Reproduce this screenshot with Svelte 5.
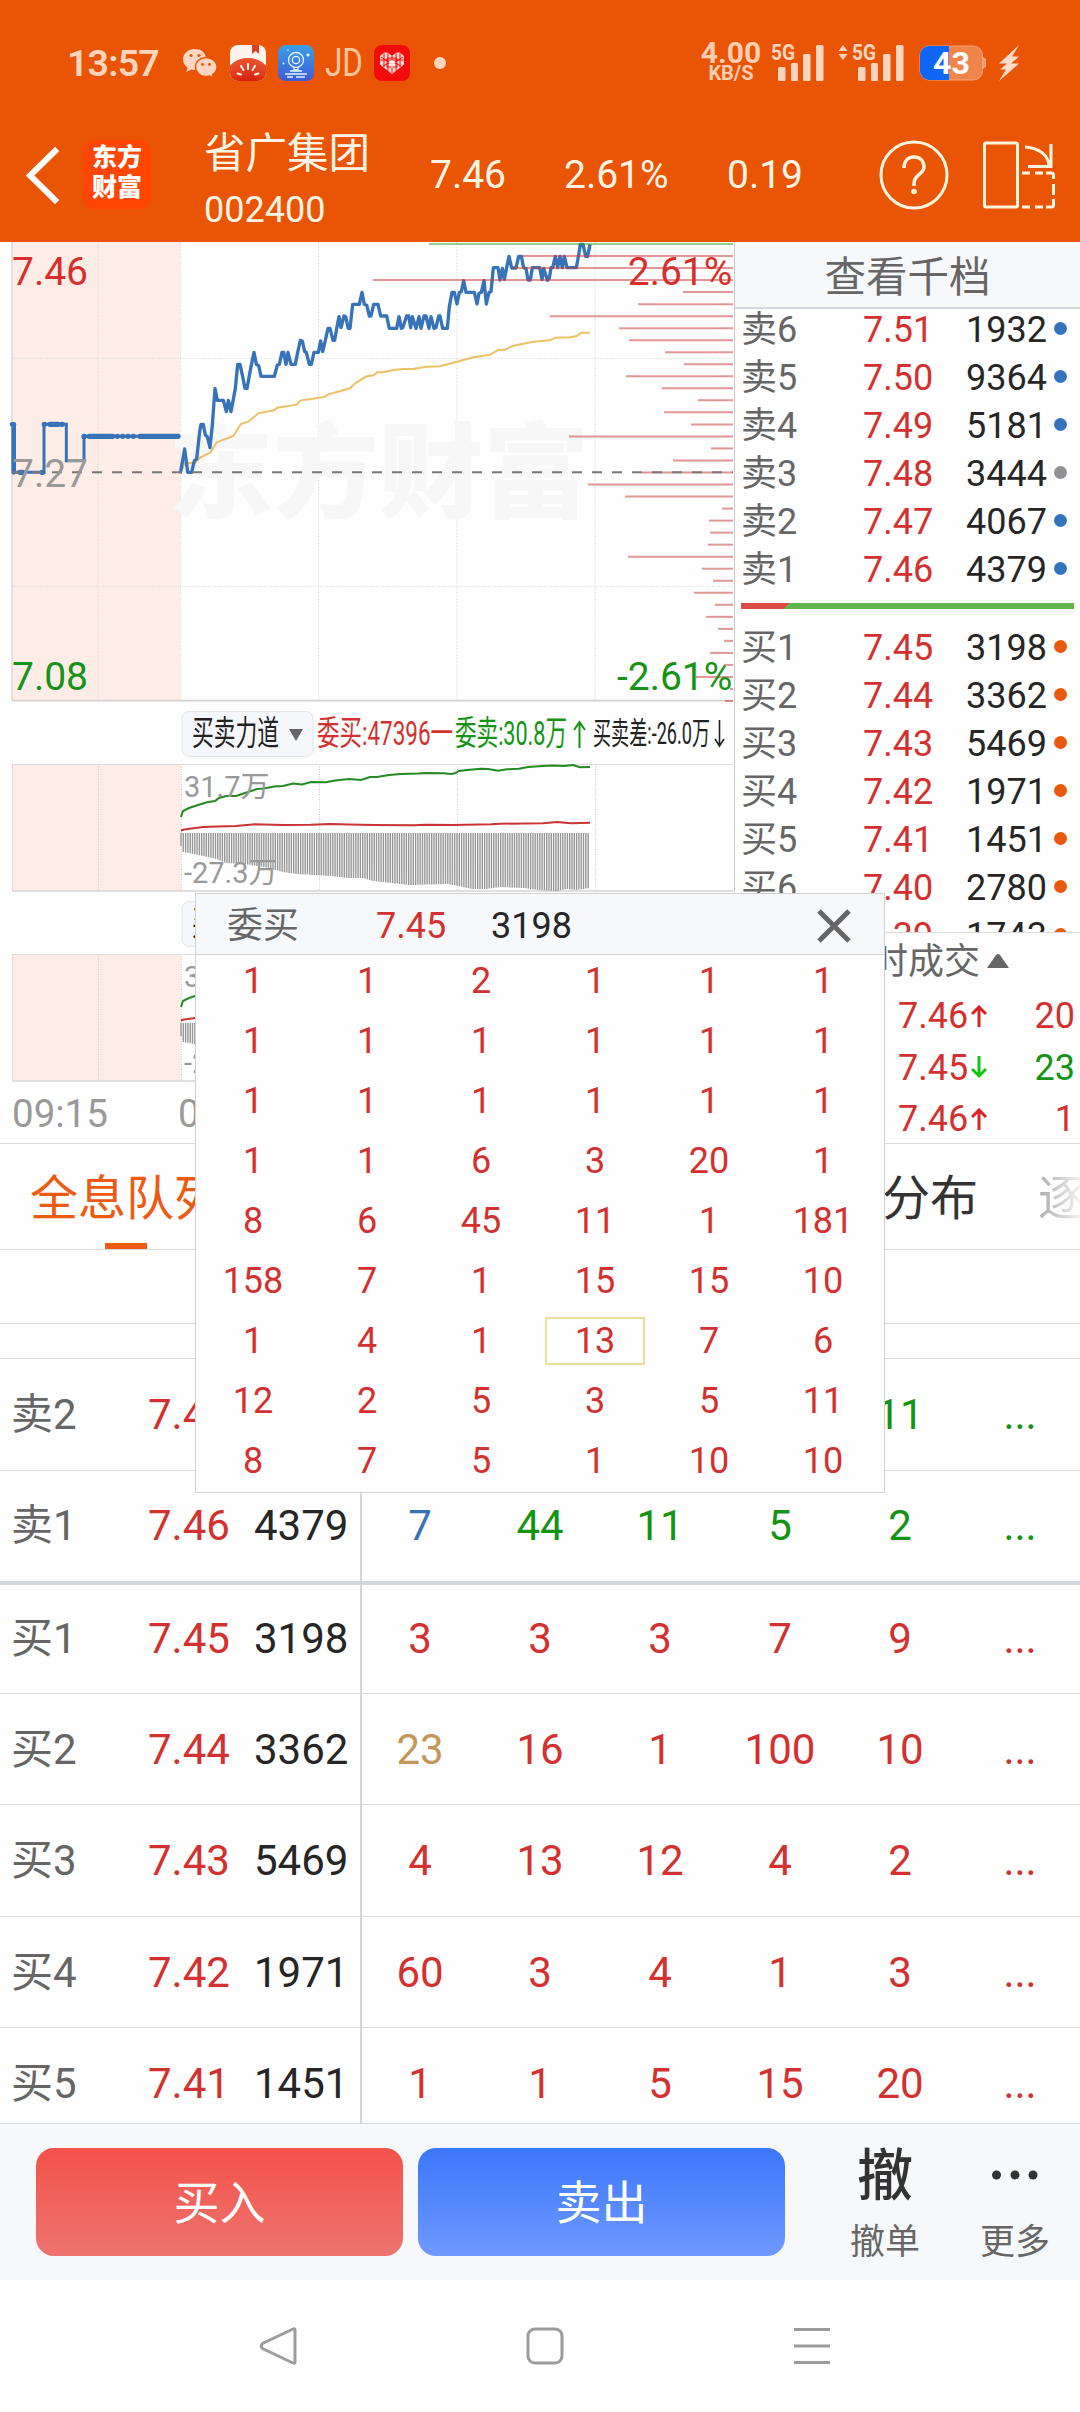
<script lang="ts">
	type Level = { label: string; price: string; volume: string; dot: string };

	const sells: Level[] = [
		{ label: '卖6', price: '7.51', volume: '1932', dot: 'blue' },
		{ label: '卖5', price: '7.50', volume: '9364', dot: 'blue' },
		{ label: '卖4', price: '7.49', volume: '5181', dot: 'blue' },
		{ label: '卖3', price: '7.48', volume: '3444', dot: 'gray' },
		{ label: '卖2', price: '7.47', volume: '4067', dot: 'blue' },
		{ label: '卖1', price: '7.46', volume: '4379', dot: 'blue' }
	];

	const buys: Level[] = [
		{ label: '买1', price: '7.45', volume: '3198', dot: 'orange' },
		{ label: '买2', price: '7.44', volume: '3362', dot: 'orange' },
		{ label: '买3', price: '7.43', volume: '5469', dot: 'orange' },
		{ label: '买4', price: '7.42', volume: '1971', dot: 'orange' },
		{ label: '买5', price: '7.41', volume: '1451', dot: 'orange' },
		{ label: '买6', price: '7.40', volume: '2780', dot: 'orange' },
		{ label: '', price: '7.39', volume: '1743', dot: 'orange' }
	];

	const trades = [
		{ price: '7.46', up: true, qty: '20', color: 'red' },
		{ price: '7.45', up: false, qty: '23', color: 'green' },
		{ price: '7.46', up: true, qty: '1', color: 'red' }
	];

	const queue = [
		{ label: '卖2', price: '7.47', volume: '', side: 'sell', orders: ['', '', '', '', '11'] },
		{ label: '卖1', price: '7.46', volume: '4379', side: 'sell', orders: ['7', '44', '11', '5', '2'], mark: 'blue' },
		{ label: '买1', price: '7.45', volume: '3198', side: 'buy', orders: ['3', '3', '3', '7', '9'] },
		{ label: '买2', price: '7.44', volume: '3362', side: 'buy', orders: ['23', '16', '1', '100', '10'], mark: 'gold' },
		{ label: '买3', price: '7.43', volume: '5469', side: 'buy', orders: ['4', '13', '12', '4', '2'] },
		{ label: '买4', price: '7.42', volume: '1971', side: 'buy', orders: ['60', '3', '4', '1', '3'] },
		{ label: '买5', price: '7.41', volume: '1451', side: 'buy', orders: ['1', '1', '5', '15', '20'] }
	];

	const popupOrders = [
		1, 1, 2, 1, 1, 1,
		1, 1, 1, 1, 1, 1,
		1, 1, 1, 1, 1, 1,
		1, 1, 6, 3, 20, 1,
		8, 6, 45, 11, 1, 181,
		158, 7, 1, 15, 15, 10,
		1, 4, 1, 13, 7, 6,
		12, 2, 5, 3, 5, 11,
		8, 7, 5, 1, 10, 10
	];
	const selectedOrder = 39;

	// left end of each price-volume bar, one per cent step from the top
	const volumeBars = [
		429, 522, 512, 373, 683, 638, 550, 619, 629, 665, 684, 626, 662, 698, 664, 691, 569, 711, 673, 642,
		588, 625, 722, 709, 710, 708, 628, 702, 713, 694, 715, 706, 718, 724, 710, 724, 696, 730, 725
	];

	// chart paths use three units per pixel
	const pricePath =
		'541,715 554,642 563,712 575,712 583,677 590,672 599,590 603,568 610,568 616,600 622,605 630,638 637,570 645,460 652,496 670,496 679,530 685,496 693,530 706,460 713,388 720,388 728,425 735,460 741,460 752,400 762,352 769,388 776,392 783,424 823,424 832,390 838,388 846,352 851,352 858,388 864,352 873,388 886,388 893,352 901,316 907,318 914,350 919,352 928,388 934,388 942,352 955,352 962,318 968,350 976,316 984,280 990,280 999,316 1004,316 1011,275 1017,245 1023,278 1032,243 1037,245 1045,280 1050,280 1058,208 1078,208 1086,172 1093,208 1100,210 1108,243 1113,243 1121,208 1134,208 1142,243 1160,243 1168,280 1190,280 1197,245 1204,280 1208,278 1220,243 1226,243 1232,278 1237,245 1248,280 1257,245 1263,280 1272,243 1278,243 1287,280 1293,245 1302,280 1308,278 1316,243 1320,243 1328,280 1342,280 1348,215 1356,172 1363,172 1371,207 1378,172 1384,170 1391,137 1398,172 1423,172 1431,207 1437,175 1444,172 1452,137 1459,207 1467,172 1473,170 1480,98 1494,98 1500,135 1507,100 1513,133 1520,98 1527,64 1535,99 1548,99 1556,64 1564,64 1571,98 1578,100 1584,135 1591,135 1597,98 1619,98 1626,134 1631,100 1642,136 1648,130 1653,98 1658,98 1666,64 1673,98 1680,64 1687,98 1693,64 1701,98 1729,98 1736,60 1741,28 1749,28 1757,64 1763,64 1770,28';
	const averagePath =
		'541,715 554,684 585,684 600,668 632,652 650,622 700,603 722,567 745,560 775,535 822,526 832,518 890,509 902,496 940,491 975,485 985,478 1050,460 1065,445 1100,424 1120,421 1132,412 1150,412 1180,405 1210,402 1240,402 1280,395 1320,394 1360,383 1420,367 1470,359 1495,345 1515,344 1540,332 1600,320 1650,316 1666,308 1710,307 1730,303 1744,293 1770,293';

	const askPath =
		'181,53 183,47 189,44 198,41 208,38 215,37 219,34 226,32 236,32 245,29 257,25 264,24.5 274,22.5 283,22 293,19.5 302,20.5 311,18 326,18.3 335,16.5 349,15 361,16 370,13 377,13 389,11 401,10 418,9.5 425,9 443,9.3 451,10 455,9.3 459,7 467,6 481,4.7 488,5 498,6.7 507,5.3 519,4.7 528,3 543,2 552,1.5 564,2 573,1 580,3.3 590,3';
	const bidPath =
		'181,66.5 184,65.5 203,63 217,62.5 236,62 255,60.3 283,61 311,60.7 330,60 349,60.5 373,61 415,61.3 425,60.7 453,61 491,60.3 500,59.7 543,59.3 557,58 571,59.3 590,58.7';

	const envelope = [
		[181, 82], [183, 88], [189, 89], [203, 92], [217, 95], [226, 99], [245, 100], [264, 103], [283, 108],
		[297, 110], [330, 112], [349, 114], [363, 114], [373, 117], [410, 121], [448, 120], [458, 122],
		[472, 125], [486, 125], [500, 123], [524, 124], [538, 126], [557, 127], [566, 125], [576, 126], [590, 124]
	];

	function depthAt(x: number) {
		const i = envelope.findIndex((p) => p[0] > x);
		if (i < 1) return envelope[i === 0 ? 0 : envelope.length - 1][1];
		const [x0, y0] = envelope[i - 1];
		const [x1, y1] = envelope[i];
		return y0 + ((y1 - y0) * (x - x0)) / (x1 - x0);
	}

	const diffPath = Array.from({ length: 178 }, (_, i) => {
		const x = 181 + i * 2.3;
		return `M${x.toFixed(1)} 69V${depthAt(x).toFixed(1)}`;
	}).join('');
</script>

{#snippet signal()}
	<rect x="7" y="22" width="7.5" height="14" rx="1.5" />
	<rect x="20" y="18" width="7" height="18" rx="1.5" />
	<rect x="32" y="9" width="7.5" height="27" rx="1.5" />
	<rect x="45" y="0" width="7.5" height="36" rx="1.5" />
{/snippet}

{#snippet forcePanel()}
	<div class="indicator">
		<svg width="735" height="64" viewBox="0 0 735 64">
			<rect x="182" y="9.5" width="131" height="45" rx="7" fill="#f6f7fa" stroke="#e2e5e9" />
			<text x="192" y="43" textLength="87" lengthAdjust="spacingAndGlyphs" fill="#222">买卖力道</text>
			<path d="M289 27h14l-7 12z" fill="#666" />
			<text x="317" y="43" textLength="136" lengthAdjust="spacingAndGlyphs" fill="#d3312f">委买:47396一</text>
			<text x="455" y="43" textLength="112" lengthAdjust="spacingAndGlyphs" fill="#149414">委卖:30.8万</text>
			<path d="M579.500 46V20M574 28l5.500-8 5.500 8" fill="none" stroke="#149414" stroke-width="2" />
			<text class="small" x="593" y="42" textLength="117" lengthAdjust="spacingAndGlyphs" fill="#222">买卖差:-26.0万</text>
			<path d="M719.500 18v26M715 37l4.500 7 4.500-7" fill="none" stroke="#222" stroke-width="1.600" />
		</svg>
	</div>
	<svg class="force" width="735" height="128" viewBox="0 0 735 128">
		<rect x="12" y="0" width="169" height="127" fill="#fdede6" />
		<path d="M98.500 0V127M181.500 0V127M319.500 0V127M457.500 0V127M595.500 0V127" class="dots" />
		<path d="M12.500 0V127" stroke="#ddd" />
		<path d="M12 .5H733" stroke="#dcdcdc" />
		<path d="M12 127H733" stroke="#d4d4d4" stroke-width="1.500" />
		<path d={diffPath} stroke="#979797" stroke-width="1.400" />
		<polyline points={askPath} fill="none" stroke="#228b22" stroke-width="2" />
		<polyline points={bidPath} fill="none" stroke="#c93434" stroke-width="2" />
		<text x="184" y="33" class="scale">31.7万</text>
		<text x="184" y="119" class="scale">-27.3万</text>
	</svg>
{/snippet}

{#snippet level(row: Level)}
	<div class="level">
		<span class="muted">{row.label}</span>
		<span class="red">{row.price}</span>
		<span class="volume">{row.volume}</span>
		<i class="dot {row.dot}"></i>
	</div>
{/snippet}

<div class="screen">
	<div class="status">
		<span class="clock">13:57</span>
		<svg width="36" height="36" viewBox="0 0 36 36">
			<path fill="#ffd6c2" d="M13 4C6.200 4 1 8.500 1 14.500c0 3.500 1.800 6.300 4.600 8.200L4.300 27l4.900-2.500c1.300.3 2.500.5 3.800.5h2l9-11.500C23.600 7 18.600 4 13 4z" />
			<path fill="#ffd6c2" stroke="#e95504" stroke-width="1.400" d="M24 12.500c-6 0-10.500 4-10.500 9.500s4.500 9.500 10.500 9.500c1.200 0 2.400-.2 3.500-.5l4.200 2-1.100-3.500c2.500-1.700 4.400-4.200 4.400-7.500 0-5.500-5-9.500-11-9.500z" />
			<g fill="#e95504">
				<circle cx="9" cy="10.500" r="1.600" /><circle cx="17" cy="10.500" r="1.600" />
				<circle cx="20.500" cy="19.500" r="1.400" /><circle cx="27.500" cy="19.500" r="1.400" />
			</g>
		</svg>
		<svg width="36" height="36" viewBox="0 0 36 36">
			<defs>
				<clipPath id="tile"><rect width="36" height="36" rx="8" /></clipPath>
				<radialGradient id="tomato" cx=".5" cy=".9" r=".8">
					<stop offset="0" stop-color="#d01005" /><stop offset="1" stop-color="#e9502b" />
				</radialGradient>
			</defs>
			<g clip-path="url(#tile)">
				<rect width="36" height="36" fill="#fff3ee" />
				<path d="M22 0h7v9l-3.500-3L22 9z" fill="#d7431f" />
				<ellipse cx="18" cy="29" rx="21" ry="16" fill="url(#tomato)" />
				<path d="M18 19v5M11 21l2.500 4M25 21l-2.500 4M7.500 28.500l3.500 1M28.500 28.500l-3.500 1" stroke="#fff3ee" stroke-width="2" stroke-linecap="round" />
			</g>
		</svg>
		<svg width="36" height="36" viewBox="0 0 36 36">
			<defs>
				<linearGradient id="cam" x2="0" y2="1"><stop stop-color="#3aa0e4" /><stop offset="1" stop-color="#3d5bd8" /></linearGradient>
			</defs>
			<rect width="36" height="36" rx="8" fill="url(#cam)" />
			<g fill="none" stroke="#e6f4ff" stroke-width="1.300">
				<circle cx="18" cy="15" r="7.500" /><circle cx="18" cy="15" r="3.700" />
				<path d="M16 22v3h4v-3M12 26h12M7 29h22M9 32h6M18 32h9" />
			</g>
			<g fill="#e6f4ff"><circle cx="30" cy="10" r="1.500" /><circle cx="5.500" cy="18.500" r="1" /><circle cx="10" cy="5" r=".8" /></g>
		</svg>
		<svg class="jd" width="36" height="36" viewBox="0 0 36 36" fill="#ffc4a2">
			<text x="-1" y="31" textLength="38" lengthAdjust="spacingAndGlyphs">JD</text>
		</svg>
		<svg width="36" height="36" viewBox="0 0 36 36">
			<rect width="36" height="36" rx="8" fill="#f20b0b" />
			<path d="M18 29L6 19.500V11l4-3.500h4L18 11l4-3.500h4L30 11v8.500z" fill="#ffd9d4" />
			<path d="M6 15h24M10 8v14M14 7v19M22 7v19M26 8v14M7 12l8 5M29 12l-8 5M9 21l6-3M27 21l-6-3M18 11v17M13 13h10v9H13z" stroke="#f20b0b" stroke-width="1" fill="none" />
			<path d="M15 17h6M15 20h6M18 15v8" stroke="#fff" stroke-width="1.200" />
		</svg>
		<i class="more"></i>

		<div class="speed"><b>4.00</b><span>KB/S</span></div>
		<svg class="sig" width="54" height="38" viewBox="0 -1 54 38" fill="#ffd5c2">
			<text x="0" y="15" textLength="24" lengthAdjust="spacingAndGlyphs">5G</text>
			{@render signal()}
		</svg>
		<svg class="sig" width="68" height="38" viewBox="-14 -1 68 38" fill="#ffd5c2">
			<path d="M-12.500 6L-8 0l4.500 6zM-12.500 9L-8 15l4.500-6z" />
			<text x="1" y="15" textLength="24" lengthAdjust="spacingAndGlyphs">5G</text>
			{@render signal()}
		</svg>
		<svg class="battery" width="68" height="36" viewBox="0 0 68 36">
			<rect x="1" y="1" width="62.500" height="34" rx="9" fill="#f0854c" stroke="#f5a078" />
			<path d="M30 1H10a9 9 0 0 0-9 9v16a9 9 0 0 0 9 9h20z" fill="#1067f5" />
			<path d="M64 12l3 2v8l-3 2z" fill="#f5a078" />
			<text x="14" y="29" textLength="37" lengthAdjust="spacingAndGlyphs" fill="#fff">43</text>
		</svg>
		<svg class="bolt" width="22" height="38" viewBox="0 0 22 38"><path d="M21 1L1 19.500h8L2 25.500h6L1 37l20-17.500h-8l8-7h-7z" fill="#ffdccb" /></svg>
	</div>

	<header>
		<svg class="back" width="40" height="60" viewBox="0 0 40 60"><path d="M31 6L6 30.500 31 55" fill="none" stroke="#fff" stroke-width="6" stroke-linecap="square" /></svg>
		<div class="logo">东方<br />财富</div>
		<div class="stock"><div class="name">省广集团</div><div>002400</div></div>
		<span>7.46</span>
		<span>2.61%</span>
		<span>0.19</span>
		<svg width="70" height="72" viewBox="0 0 70 72">
			<circle cx="35" cy="36" r="33" fill="none" stroke="#fff5df" stroke-width="3" />
			<path d="M25 29c0-7 4-11 10-11s10 4 10 10c0 7-10 8-10 16v3" fill="none" stroke="#fff5df" stroke-width="3.500" />
			<circle cx="35" cy="52.500" r="2.800" fill="#fff5df" />
		</svg>
		<svg width="78" height="72" viewBox="0 0 78 72" fill="none" stroke="#fff5df" stroke-width="3">
			<rect x="3.500" y="4" width="33" height="64" rx="1.500" />
			<path d="M44 8c14 1 24 8 24 20M70 5v22.500H47" />
			<path d="M41 34h8M54 34h8M65 34h5.500a2 2 0 0 1 2 2v4M72.500 45v11M72.500 60v6a2 2 0 0 1-2 2H65M62 68h-8M49 68h-8" />
		</svg>
	</header>

	<div class="market">
		<div class="charts">
			<svg class="trend" width="735" height="460" viewBox="0 21 2205 1380">
				<rect x="36" y="21" width="505" height="1376" fill="#fdede6" />
				<path d="M36 21V1397" stroke="#ddd" stroke-width="5" />
				<path d="M294 21V1397M542 21V1397M956 21V1397M1371 21V1397M1785 21V1397M36 370H2199M36 1054H2199" stroke="#d6d6d6" stroke-width="3" stroke-dasharray="3 4" />
				<text class="watermark" x="504" y="826" textLength="1262" lengthAdjust="spacingAndGlyphs">东方财富</text>
				<path d="M36 1397H2199" stroke="#d2d2d2" stroke-width="5" />
				<polyline points={averagePath} fill="none" stroke="#ecc065" stroke-width="6" />
				<g fill="none" stroke="#3673b9">
					<path d="M36 568h6M41 568V712" stroke-width="14" stroke-linecap="round" />
					<path d="M41 712H132V568H199V677H252V604H540" stroke-width="9" />
					<path d="M60 712h8M126 712h2M150 568h24M186 568h1M133 568h.1M252 604h1M268 604h70M352 604h.1M368 604h.1M384 604h.1M400 604h.1M420 604H534" stroke-width="16" stroke-linecap="round" />
					<polyline points={pricePath} stroke-width="10" stroke-linejoin="round" />
				</g>
				{#each volumeBars as left, i}
					<path d="M{left * 3} {27 + i * 36.08}H2199" stroke={i === 0 ? '#2f9b2f' : '#c83838'} stroke-opacity=".52" stroke-width="6" />
				{/each}
				<path d="M36 712H2199" stroke="#777" stroke-width="6" stroke-dasharray="30 30" />
				<g class="axis">
					<text x="36" y="151" fill="#d92f2c">7.46</text>
					<text x="36" y="757" fill="#999">7.27</text>
					<text x="36" y="1365" fill="#169416">7.08</text>
					<text x="2197" y="151" text-anchor="end" fill="#d92f2c">2.61%</text>
					<text x="2197" y="1365" text-anchor="end" fill="#169416">-2.61%</text>
				</g>
			</svg>
			{@render forcePanel()}
			{@render forcePanel()}
			<div class="times"><span>09:15</span><span>09:30</span></div>
		</div>

		<aside>
			<div class="depth-title">查看千档</div>
			<div class="levels">
				{#each sells as row}
					{@render level(row)}
				{/each}
				<div class="ratio"></div>
				{#each buys as row}
					{@render level(row)}
				{/each}
			</div>
			<div class="trades">
				<div class="trades-title">时成交<svg width="22" height="16" viewBox="0 0 22 16"><path d="M0 14L9 1q2-2 4 0L22 14z" fill="#666" /></svg></div>
				{#each trades as t}
					<div class="trade">
						<span class="red">{t.price}</span>
						<svg width="16" height="24" viewBox="0 0 16 24" fill="none" stroke={t.up ? '#d92222' : '#11c411'} stroke-width="3">
							<path d={t.up ? 'M8 22V2M1 9l7-7 7 7' : 'M8 0v20M1 13l7 7 7-7'} />
						</svg>
						<span class="qty {t.color}">{t.qty}</span>
					</div>
				{/each}
			</div>
		</aside>
	</div>

	<nav class="tabs">
		<span class="tab active">全息队列</span>
		<span class="tab second">分布</span>
		<span class="tab fade">逐</span>
	</nav>
	<div class="strip tall"></div>
	<div class="strip"></div>

	<div class="queue">
		{#each queue as row}
			<div class="row {row.side}" class:last-sell={row.label === '卖1'} class:first-buy={row.label === '买1'}>
				<div class="head">
					<span class="muted">{row.label}</span>
					<span class="red price">{row.price}</span>
					<span class="volume">{row.volume}</span>
				</div>
				{#each row.orders as order, i}
					<span class="order {i === 0 ? row.mark : ''}">{order}</span>
				{/each}
				<span class="order">...</span>
			</div>
		{/each}
	</div>

	<footer>
		<button class="buy">买入</button>
		<button class="sell">卖出</button>
		<div class="tool"><b>撤</b><span>撤单</span></div>
		<div class="tool">
			<svg width="48" height="54" viewBox="0 0 48 54" fill="#333"><circle cx="5.500" cy="27" r="4.500" /><circle cx="24" cy="27" r="4.500" /><circle cx="42" cy="27" r="4.500" /></svg>
			<span>更多</span>
		</div>
	</footer>

	<div class="sysnav">
		<svg width="38" height="40" viewBox="0 0 38 40"><path d="M34 3L3.500 17.500q-2.500 2.500 0 5L34 37q2 1 2-1V4q0-2-2-1z" /></svg>
		<svg width="38" height="40" viewBox="0 0 38 40"><rect x="2" y="3" width="34" height="34" rx="7" /></svg>
		<svg width="38" height="40" viewBox="0 0 38 40"><path d="M1 3.500h36M1 20h36M1 36.500h36" /></svg>
	</div>

	<div class="popup">
		<div class="popup-head">
			<span class="muted">委买</span>
			<span class="red">7.45</span>
			<span>3198</span>
			<svg width="34" height="34" viewBox="0 0 34 34"><path d="M2 2l30 30M32 2L2 32" stroke="#666" stroke-width="5" /></svg>
		</div>
		<div class="popup-grid">
			{#each popupOrders as n, i}
				<span class:selected={i === selectedOrder}>{n}</span>
			{/each}
		</div>
	</div>
</div>

<style>
	:global(body) {
		margin: 0;
		background: #fff;
	}

	.screen {
		position: relative;
		width: 1080px;
		height: 2412px;
		overflow: hidden;
		background: #fefefe;
		color: #262626;
		font-family: Roboto, 'Noto Sans CJK SC', sans-serif;
		font-size: 36px;
		display: flex;
		flex-direction: column;
	}

	svg {
		display: block;
		flex: none;
	}

	.red { color: #d3312f; }
	.green { color: #149414; }
	.muted { color: #666; }

	.status {
		height: 125px;
		flex: none;
		box-sizing: border-box;
		padding-left: 67px;
		display: flex;
		align-items: center;
		gap: 12px;
		background: #e95504;
		color: #ffd5c0;
	}

	.clock {
		width: 103px;
		font-size: 37.5px;
		font-weight: 600;
		letter-spacing: -0.8px;
	}

	.jd {
		overflow: visible;
		font-size: 38px;
	}

	.more {
		width: 12px;
		height: 12px;
		margin: 0 243px 0 12px;
		border-radius: 50%;
		background: #ffd5c0;
	}

	.speed {
		width: 60px;
		display: flex;
		flex-direction: column;
		align-items: center;
		line-height: 20px;
		color: #ffceb3;
	}

	.speed b {
		font-size: 30px;
		font-weight: 700;
	}

	.speed span {
		font-size: 20px;
		font-weight: 700;
	}

	.sig {
		margin-left: -2px;
		overflow: visible;
	}

	.sig text {
		font-size: 22px;
		font-weight: 700;
	}

	.sig + .sig {
		margin-left: 0;
	}

	.battery {
		margin-left: 2px;
	}

	.battery text {
		font-size: 31px;
		font-weight: 700;
	}

	.bolt {
		margin-left: -1px;
	}

	header {
		height: 117px;
		flex: none;
		display: grid;
		grid-template-columns: 83px 121px 226px 134px 163px 152px 102px 1fr;
		grid-template-rows: 99px;
		align-items: center;
		background: #e95504;
		color: #fff5e6;
		font-size: 39px;
	}

	.back {
		margin-left: 24px;
	}

	.logo {
		width: 68px;
		height: 69px;
		box-sizing: border-box;
		padding-top: 3px;
		border-radius: 12px;
		background: #ff4605;
		text-align: center;
		font-size: 25px;
		font-weight: 900;
		line-height: 30px;
		color: #fff;
	}

	.stock {
		margin-top: 14px;
		font-size: 36px;
		line-height: 57px;
	}

	.stock .name {
		font-size: 41.5px;
		line-height: 57px;
	}

	.market {
		height: 901px;
		flex: none;
		display: flex;
		border-bottom: 1px solid #dcdcdc;
	}

	.charts {
		width: 734px;
		flex: none;
		overflow: hidden;
		border-right: 1px solid #ccc;
	}

	.axis text {
		font-size: 117px;
	}

	.watermark {
		font-size: 310px;
		font-weight: 900;
		fill: #f7f7f7;
	}

	.indicator {
		height: 62px;
	}

	.indicator text {
		font-size: 34px;
	}

	.indicator text.small {
		font-size: 31px;
	}

	.dots {
		stroke: #ccc;
		stroke-dasharray: 1 1.5;
	}

	.scale {
		font-size: 29px;
		fill: #999;
	}

	.times {
		display: flex;
		height: 62px;
		line-height: 63px;
		padding-left: 12px;
		font-size: 38.5px;
		color: #999;
	}

	.times span {
		width: 166px;
	}

	aside {
		flex: 1;
		min-width: 0;
	}

	.depth-title {
		height: 65px;
		line-height: 71px;
		border-bottom: 2px solid #d5d8dc;
		background: #f7f8fa;
		text-align: center;
		font-size: 41.5px;
		color: #666;
	}

	.levels {
		height: 624px;
		box-sizing: border-box;
		margin-top: -3px;
		padding-top: 0;
		height: 627px;
		overflow: hidden;
		border-bottom: 1px solid #dcdcdc;
	}

	.level {
		height: 48px;
		line-height: 49px;
		display: grid;
		grid-template-columns: 122px 1fr 81px 20px;
		padding: 0 13px 0 6px;
	}

	.dot {
		width: 13px;
		height: 13px;
		margin: 16px 0 0 7px;
		border-radius: 50%;
	}

	.dot.blue { background: #3474bf; }
	.dot.gray { background: #919195; }
	.dot.orange { background: #e85b0c; }

	.ratio {
		height: 6px;
		margin: 9px 6px 15px;
		background: linear-gradient(135deg, #dd4b47 34px, #62b54e 34.5px);
	}

	.trades-title {
		height: 58px;
		line-height: 62px;
		margin-left: 137px;
		display: flex;
		align-items: center;
		gap: 7px;
		color: #666;
	}

	.trade {
		height: 51.5px;
		line-height: 51.5px;
		padding: 0 5px 0 163px;
		display: flex;
		align-items: center;
		gap: 3px;
	}

	.qty {
		margin-left: auto;
	}

	.tabs {
		height: 105px;
		flex: none;
		display: flex;
		border-bottom: 1px solid #dcdcdc;
		font-size: 48px;
		line-height: 110px;
		white-space: nowrap;
		color: #333;
	}

	.tab {
		flex: none;
	}

	.tab.active {
		width: 192px;
		margin-left: 30px;
		color: #ed5b12;
		background: linear-gradient(#ef5a12, #ef5a12) center bottom / 42px 6px no-repeat;
	}

	.tab.second {
		margin-left: 660px;
	}

	.tab.fade {
		width: 43px;
		margin-left: 60px;
		overflow: hidden;
		background: linear-gradient(90deg, #aaa, #f4f4f4);
		background-clip: text;
		-webkit-background-clip: text;
		color: transparent;
	}

	.strip {
		height: 34px;
		flex: none;
		border-bottom: 1px solid #d9d9d9;
	}

	.strip.tall {
		height: 73px;
	}

	.queue {
		height: 764px;
		flex: none;
		overflow: hidden;
		font-size: 42px;
	}

	.row {
		height: 111.5px;
		box-sizing: border-box;
		border-bottom: 1.5px solid #d9dbde;
		display: grid;
		grid-template-columns: repeat(9, 120px);
		line-height: 111px;
	}

	.row.last-sell {
		height: 114px;
		line-height: 110px;
		border-bottom: 4px solid #d3d7da;
	}

	.row.first-buy {
		height: 109px;
		line-height: 107px;
	}

	.head {
		grid-column: span 3;
		margin-right: -2px;
		box-sizing: border-box;
		border-right: 2px solid #d3d7da;
		display: grid;
		grid-template-columns: 137px 106px 1fr;
		padding-left: 11px;
	}

	.order {
		text-align: center;
	}

	.sell .order { color: #149414; }
	.buy .order { color: #d3312f; }
	.row .order.blue { color: #3673b5; }
	.row .order.gold { color: #c4965a; }

	footer {
		height: 157px;
		flex: none;
		box-sizing: border-box;
		border-top: 1px solid #d5d8db;
		background: #f7f8fa;
		display: flex;
		padding: 24px 0 0 36px;
	}

	button {
		width: 367px;
		height: 108px;
		margin-right: 15px;
		padding: 3px 0 0;
		border: none;
		border-radius: 18px;
		color: #fff;
		font-family: inherit;
		font-size: 46px;
		line-height: 105px;
	}

	button.buy { background: linear-gradient(#f4524b, #ed746e); }
	button.sell { background: linear-gradient(#3b77fa, #6e99ff); }

	.tool {
		width: 130px;
		margin-left: 20px;
		display: flex;
		flex-direction: column;
		align-items: center;
		font-size: 35px;
		color: #666;
	}

	.tool + .tool {
		margin-left: 0;
	}

	.tool b {
		height: 54px;
		font-size: 56px;
		font-weight: 500;
		line-height: 57px;
		color: #333;
	}

	.tool span {
		line-height: 81px;
	}

	.sysnav {
		flex: 1;
		display: flex;
		gap: 229px;
		padding: 46px 0 0 259px;
	}

	.sysnav svg {
		fill: none;
		stroke: #9c9c9c;
		stroke-width: 3;
	}

	.popup {
		position: absolute;
		left: 195px;
		top: 893px;
		width: 688px;
		height: 598px;
		border: 1px solid #d0d3d6;
		background: #fefefe;
	}

	.popup-head {
		height: 60px;
		line-height: 64px;
		border-bottom: 1px solid #d0d3d6;
		background: #f7f8fa;
		display: grid;
		grid-template-columns: 149px 115px 1fr 67px;
		padding-left: 31px;
		align-items: center;
	}

	.popup-grid {
		margin-top: -4px;
		display: grid;
		grid-template-columns: repeat(6, 114px);
		grid-auto-rows: 60px;
		line-height: 60px;
		text-align: center;
		color: #d3312f;
	}

	.popup-grid .selected {
		margin: 6px 7px;
		line-height: 44px;
		border: 2px solid #ebde98;
	}
</style>
